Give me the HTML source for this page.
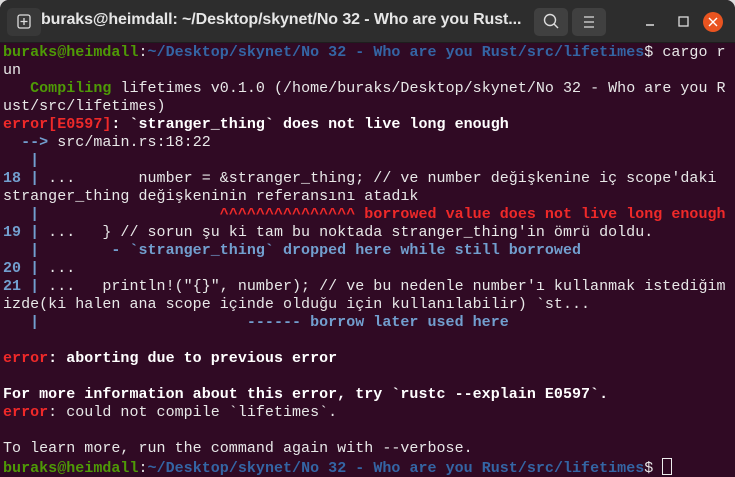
<!DOCTYPE html>
<html><head><meta charset="utf-8"><style>
html,body{margin:0;padding:0;width:735px;height:477px;overflow:hidden;background:#dcdcdc}
.win{position:absolute;left:0;top:0;width:735px;height:477px;border-radius:9px 9px 0 0;overflow:hidden;background:#300a24}
.tb{position:absolute;left:0;top:0;width:735px;height:42px;background:#2d2d2d;border-bottom:1px solid #1e1e1e}
.title{position:absolute;left:41px;top:11px;color:#e6e6e6;font:bold 16px "Liberation Sans",sans-serif;letter-spacing:-0.1px}
.btn{position:absolute;top:8px;width:34px;height:28px;background:#404040;border-radius:5px}
.term{position:absolute;left:3px;top:44px;font:15px/18px "Liberation Mono",monospace;color:#e8e8e8;white-space:pre;letter-spacing:0.03px}
.g{color:#4e9a06;font-weight:bold}.b{color:#3465a4;font-weight:bold}.r{color:#ef2929;font-weight:bold}
.lb{color:#729fcf;font-weight:bold}.w{font-weight:bold;color:#fff}
.cur{display:inline-block;width:8px;height:15px;border:1px solid #eee;vertical-align:-3px}
</style></head><body><div class="win">
<div class="tb">
<div class="btn" style="left:7px;background:#383838"><svg width="34" height="28"><rect x="11" y="7" width="12" height="13" rx="2" fill="none" stroke="#ddd" stroke-width="1.3"/><path d="M17 10v7M13.5 13.5h7" stroke="#ddd" stroke-width="1.3"/></svg></div>
<div class="title">buraks@heimdall: ~/Desktop/skynet/No 32 - Who are you Rust...</div>
<div class="btn" style="left:534px"><svg width="34" height="28"><circle cx="16" cy="12" r="5.5" fill="none" stroke="#ddd" stroke-width="1.4"/><path d="M20 16l4 4" stroke="#ddd" stroke-width="1.4"/></svg></div>
<div class="btn" style="left:572px"><svg width="34" height="28"><path d="M12 9h10M12 14h10M12 19h10" stroke="#ddd" stroke-width="1.3"/></svg></div>
<svg style="position:absolute;left:610px;top:8px" width="125" height="28"><path d="M36 17h8" stroke="#ddd" stroke-width="1.4"/><rect x="69" y="9" width="9" height="9" fill="none" stroke="#ddd" stroke-width="1.3"/><circle cx="103" cy="14" r="10" fill="#e95420"/><path d="M99 10l8 8M107 10l-8 8" stroke="#fff" stroke-width="1.4"/></svg>
</div>
<div class="term"><span class="g">buraks@heimdall</span>:<span class="b">~/Desktop/skynet/No 32 - Who are you Rust/src/lifetimes</span>$ cargo r
un
   <span class="g">Compiling</span> lifetimes v0.1.0 (/home/buraks/Desktop/skynet/No 32 - Who are you R
ust/src/lifetimes)
<span class="r">error[E0597]</span><span class="w">: `stranger_thing` does not live long enough</span>
  <span class="lb">--&gt;</span> src/main.rs:18:22
   <span class="lb">|</span>
<span class="lb">18 |</span> ...       number = &amp;stranger_thing; // ve number değişkenine iç scope'daki
stranger_thing değişkeninin referansını atadık
   <span class="lb">|</span>                    <span class="r">^^^^^^^^^^^^^^^ borrowed value does not live long enough</span>
<span class="lb">19 |</span> ...   } // sorun şu ki tam bu noktada stranger_thing'in ömrü doldu.
   <span class="lb">|        - `stranger_thing` dropped here while still borrowed</span>
<span class="lb">20 |</span> ...
<span class="lb">21 |</span> ...   println!("{}", number); // ve bu nedenle number'ı kullanmak istediğim
izde(ki halen ana scope içinde olduğu için kullanılabilir) `st...
   <span class="lb">|                       ------ borrow later used here</span>

<span class="r">error</span><span class="w">: aborting due to previous error</span>

<span class="w">For more information about this error, try `rustc --explain E0597`.</span>
<span class="r">error</span>: could not compile `lifetimes`.

To learn more, run the command again with --verbose.
<span class="g">buraks@heimdall</span>:<span class="b">~/Desktop/skynet/No 32 - Who are you Rust/src/lifetimes</span>$ <span class="cur"></span></div>
</div></body></html>
